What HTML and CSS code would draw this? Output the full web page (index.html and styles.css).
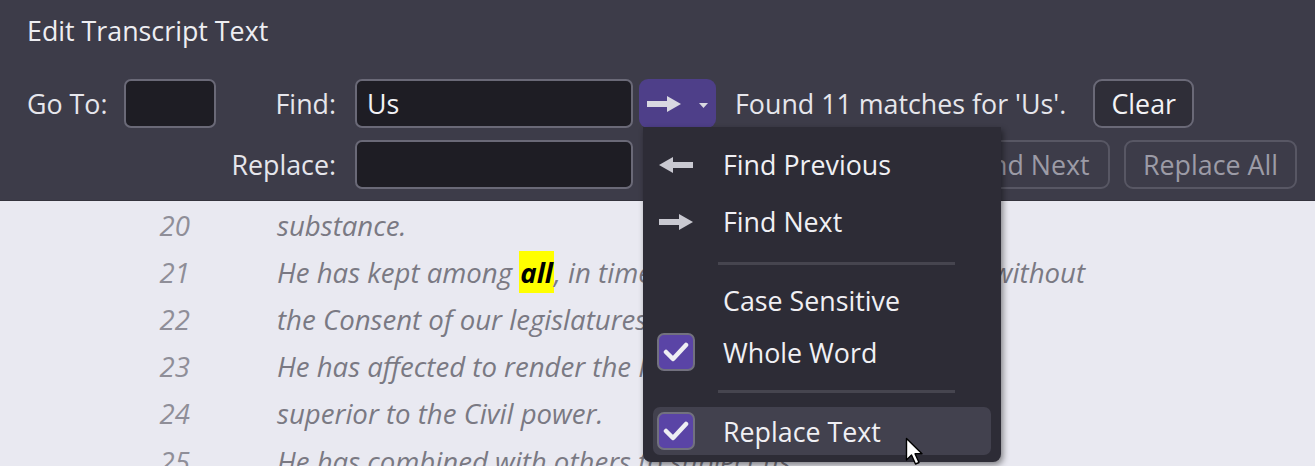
FILE: index.html
```html
<!DOCTYPE html>
<html lang="en">
<head>
    <meta charset="UTF-8"/>
    <title>Edit Transcript Text</title>
    <link rel="stylesheet" href="styles.css">
</head>
<body>
<div class="editor">
    <div class="toolbar">
        <div class="title">Edit Transcript Text</div>
        <div class="row">
            <span class="goLabel">Go To:</span>
            <span class="field goField"></span>
            <span class="label">Find:</span>
            <span class="field findField">Us</span>
            <span class="splitBtn">
                <svg class="arrow" width="34" height="16" viewBox="0 0 34 16"><path d="M0 5 H20 V0 L34 8 L20 16 V11 H0 Z"/></svg>
                <svg class="caret" width="9" height="5" viewBox="0 0 9 5"><path d="M0 0 H9 L4.5 5 Z"/></svg>
            </span>
            <span class="status">Found 11 matches for 'Us'.</span>
            <span class="btn clearBtn">Clear</span>
        </div>
        <div class="row">
            <span class="spacer"></span>
            <span class="label">Replace:</span>
            <span class="field findField"></span>
            <span class="btn off replaceBtn">Replace</span>
            <span class="btn off nextBtn">Find Next</span>
            <span class="btn off allBtn">Replace All</span>
        </div>
    </div>

    <div class="lines">
        <div class="line"><span class="num">20</span><span class="txt">substance.</span></div>
        <div class="line"><span class="num">21</span><span class="txt">He has kept among <b class="hit">all</b>, in times of peace, Standing Armies without</span></div>
        <div class="line"><span class="num">22</span><span class="txt">the Consent of our legislatures.</span></div>
        <div class="line"><span class="num">23</span><span class="txt">He has affected to render the Military independent</span></div>
        <div class="line"><span class="num">24</span><span class="txt">superior to the Civil power.</span></div>
        <div class="line"><span class="num">25</span><span class="txt">He has combined with others to subject us</span></div>
    </div>

    <!-- menu opened from the arrow button -->
    <div class="menu">
        <div class="item big">
            <span class="icon"><svg width="34" height="16" viewBox="0 0 34 16"><path d="M34 5 H14 V0 L0 8 L14 16 V11 H34 Z"/></svg></span>
            Find Previous
        </div>
        <div class="item big">
            <span class="icon"><svg width="34" height="16" viewBox="0 0 34 16"><path d="M0 5 H20 V0 L34 8 L20 16 V11 H0 Z"/></svg></span>
            Find Next
        </div>
        <div class="sep"></div>
        <div class="item">
            <span class="icon"></span>
            Case Sensitive
        </div>
        <div class="item">
            <span class="icon"><span class="check"><svg width="26" height="20" viewBox="0 0 26 20"><path d="M3 10 L10 17 L23 3"/></svg></span></span>
            Whole Word
        </div>
        <div class="sep sep2"></div>
        <div class="item hover">
            <span class="icon"><span class="check"><svg width="26" height="20" viewBox="0 0 26 20"><path d="M3 10 L10 17 L23 3"/></svg></span></span>
            Replace Text
        </div>
    </div>

    <svg class="cursor" width="22" height="30" viewBox="0 0 22 30"><path d="M1.5 1.5 V23 L6.5 18 L10.5 27 L14 25.5 L10 16.8 H17 Z"/></svg>
</div>
</body>
</html>
```

FILE: styles.css
```css
* {
    margin: 0;
    padding: 0;
    box-sizing: border-box;
}

body {
    width: 1315px;
    height: 466px;
    overflow: hidden;
    font-family: "Open Sans", "Liberation Sans", sans-serif;
    font-size: 26.8px;
    background: #e9e9f1;
}

.editor {
    position: relative;
    height: 466px;
}

.toolbar {
    background: #3d3c49;
    color: #e6e6ec;
    padding: 13px 0 12px 27px;
    height: 201px;
    border-bottom: 1px solid #34333d;
}

.title {
    line-height: 36px;
    color: #eeeef2;
    margin-bottom: 30px;
}

.row {
    display: flex;
    align-items: center;
    height: 49px;
    white-space: nowrap;
}

.row + .row {
    margin-top: 12px;
}

.goLabel {
    width: 97px;
}

.spacer {
    width: 189px;
}

.label {
    width: 139px;
    padding-right: 19px;
    text-align: right;
}

.field {
    height: 49px;
    background: #1e1d24;
    border: 2px solid #6a6977;
    border-radius: 7px;
    color: #f2f2f5;
    padding-left: 10px;
    line-height: 45px;
}

.goField {
    width: 92px;
}

.findField {
    width: 278px;
}

.splitBtn {
    margin-left: 6px;
    width: 77px;
    height: 49px;
    background: #4e3f89;
    border-radius: 9px;
    display: flex;
    align-items: center;
    padding-left: 8px;
}

.splitBtn svg {
    fill: #d9d9e1;
}

.splitBtn .caret {
    margin-left: 18px;
    margin-top: 3px;
}

.status {
    margin-left: 19px;
    color: #e6e6ec;
}

.btn {
    height: 49px;
    line-height: 45px;
    border: 2px solid #6a6977;
    border-radius: 9px;
    text-align: center;
}

.clearBtn {
    margin-left: 27px;
    width: 101px;
    background: #2f2e38;
    color: #f3f3f6;
}

.btn.off {
    color: #9c9ba6;
    border-color: #585764;
}

/* sits under the open menu */
.replaceBtn {
    margin-left: 14px;
    width: 120px;
}

.nextBtn {
    margin-left: 183px;
    width: 160px;
}

.allBtn {
    margin-left: 14px;
    width: 173px;
}

.line {
    display: flex;
    height: 47.2px;
    align-items: center;
    font-style: italic;
    font-size: 27.6px;
    white-space: nowrap;
}

.num {
    width: 190px;
    text-align: right;
    color: #8f8e98;
}

.txt {
    margin-left: 87px;
    color: #7a7983;
}

.hit {
    background: #ffff00;
    color: #000;
    padding: 2px 1px;
}

.menu {
    position: absolute;
    left: 643px;
    top: 127px;
    width: 358px;
    height: 335px;
    background: #2d2c36;
    border-radius: 0 0 8px 8px;
    padding: 9px 10px 7px;
    color: #f0f0f4;
    box-shadow: 2px 3px 6px rgba(0, 0, 0, 0.45);
}

.item {
    display: flex;
    align-items: center;
    height: 48px;
    padding-left: 4px;
    border-radius: 7px;
}

.item.big {
    height: 57px;
}

.item + .item {
    margin-top: 4px;
}

.item.big + .item.big {
    margin-top: 0;
}

.item.hover {
    background: #42414e;
}

.icon {
    width: 38px;
    height: 38px;
    margin-right: 28px;
    display: flex;
    align-items: center;
    justify-content: center;
}

.icon svg {
    fill: #c9c9d1;
}

.check {
    width: 38px;
    height: 38px;
    background: #5a44a6;
    border: 2px solid #72717f;
    border-radius: 7px;
    display: flex;
    align-items: center;
    justify-content: center;
}

.check svg {
    fill: none;
    stroke: #eeeef3;
    stroke-width: 4.5;
    stroke-linecap: round;
    stroke-linejoin: round;
}

.sep {
    height: 26px;
    display: flex;
    align-items: center;
    padding-left: 65px;
}

.sep::after {
    content: "";
    width: 237px;
    height: 3px;
    background: #46454f;
}

.sep.sep2 {
    height: 31px;
}

.cursor {
    position: absolute;
    left: 905px;
    top: 437px;
}

.cursor path {
    fill: #fff;
    stroke: #000;
    stroke-width: 1.4;
    stroke-linejoin: round;
}
```
